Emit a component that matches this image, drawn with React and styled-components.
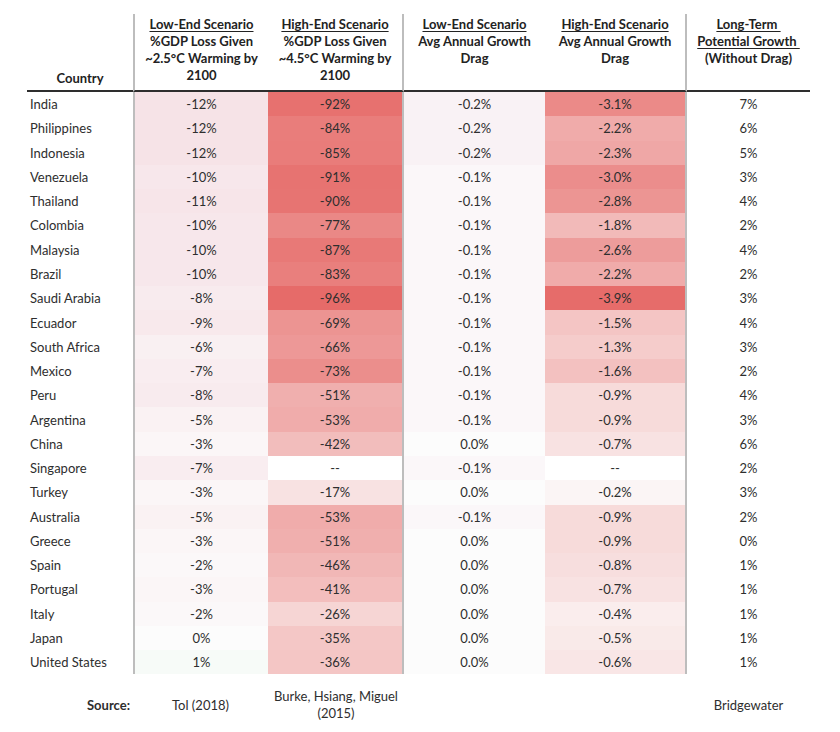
import React from 'react'
import styled, {createGlobalStyle} from 'styled-components'

const GlobalStyle = createGlobalStyle`
  html, body {
    margin: 0;
    padding: 0;
    background: #ffffff;
  }
  body {
    font-family: 'Lato', 'Open Sans', sans-serif;
    color: #2b2b2b;
  }
`

const COLS = '106px 135px 136px 141px 142px 123px'

const rows = [
    ['India', -12, -92, -0.2, -3.1, 7],
    ['Philippines', -12, -84, -0.2, -2.2, 6],
    ['Indonesia', -12, -85, -0.2, -2.3, 5],
    ['Venezuela', -10, -91, -0.1, -3.0, 3],
    ['Thailand', -11, -90, -0.1, -2.8, 4],
    ['Colombia', -10, -77, -0.1, -1.8, 2],
    ['Malaysia', -10, -87, -0.1, -2.6, 4],
    ['Brazil', -10, -83, -0.1, -2.2, 2],
    ['Saudi Arabia', -8, -96, -0.1, -3.9, 3],
    ['Ecuador', -9, -69, -0.1, -1.5, 4],
    ['South Africa', -6, -66, -0.1, -1.3, 3],
    ['Mexico', -7, -73, -0.1, -1.6, 2],
    ['Peru', -8, -51, -0.1, -0.9, 4],
    ['Argentina', -5, -53, -0.1, -0.9, 3],
    ['China', -3, -42, 0.0, -0.7, 6],
    ['Singapore', -7, null, -0.1, null, 2],
    ['Turkey', -3, -17, 0.0, -0.2, 3],
    ['Australia', -5, -53, -0.1, -0.9, 2],
    ['Greece', -3, -51, 0.0, -0.9, 0],
    ['Spain', -2, -46, 0.0, -0.8, 1],
    ['Portugal', -3, -41, 0.0, -0.7, 1],
    ['Italy', -2, -26, 0.0, -0.4, 1],
    ['Japan', 0, -35, 0.0, -0.5, 1],
    ['United States', 1, -36, 0.0, -0.6, 1],
]

const BASE = [252, 252, 252]
const scales = {
    1: {max: 12, end: [246, 227, 231]},
    2: {max: 96, end: [230, 107, 105]},
    3: {max: 0.2, end: [249, 242, 245]},
    4: {max: 3.9, end: [230, 108, 106]},
}

function shade(col, value) {
    if (value === null) return '#ffffff'
    if (value > 0) return 'rgb(247, 251, 248)'
    const {max, end} = scales[col]
    const t = Math.min(1, Math.abs(value) / max)
    const c = BASE.map((b, i) => Math.round(b + (end[i] - b) * t))
    return `rgb(${c.join(',')})`
}

function pct(col, value) {
    if (value === null) return '--'
    if (col === 3 || col === 4) return `${value.toFixed(1)}%`
    return `${value}%`
}

function ClimateTable() {
    return (
        <Page>
            <Grid>
                <HeadCell bottom>Country</HeadCell>
                <HeadCell divider="left">
                    <U>Low-End Scenario</U>
                    <Line>%GDP Loss Given</Line>
                    <Line>~2.5°C Warming by</Line>
                    <Line>2100</Line>
                </HeadCell>
                <HeadCell divider="right">
                    <U>High-End Scenario</U>
                    <Line>%GDP Loss Given</Line>
                    <Line>~4.5°C Warming by</Line>
                    <Line>2100</Line>
                </HeadCell>
                <HeadCell>
                    <U>Low-End Scenario</U>
                    <Line>Avg Annual Growth</Line>
                    <Line>Drag</Line>
                </HeadCell>
                <HeadCell divider="right">
                    <U>High-End Scenario</U>
                    <Line>Avg Annual Growth</Line>
                    <Line>Drag</Line>
                </HeadCell>
                <HeadCell>
                    <U>Long-Term&nbsp;</U>
                    <U>Potential Growth&nbsp;</U>
                    <Line>(Without Drag)</Line>
                </HeadCell>

                {rows.map(([name, a, b, c, d, e]) => (
                    <React.Fragment key={name}>
                        <NameCell>{name}</NameCell>
                        <Cell divider="left" bg={shade(1, a)}>{pct(1, a)}</Cell>
                        <Cell divider="right" bg={shade(2, b)}>{pct(2, b)}</Cell>
                        <Cell bg={shade(3, c)}>{pct(3, c)}</Cell>
                        <Cell divider="right" bg={shade(4, d)}>{pct(4, d)}</Cell>
                        <Cell bg="#ffffff">{pct(5, e)}</Cell>
                    </React.Fragment>
                ))}
            </Grid>

            <SourceRow>
                <SourceLabel>Source:</SourceLabel>
                <SourceText>Tol (2018)</SourceText>
                <SourceText>Burke, Hsiang, Miguel<br/>(2015)</SourceText>
                <span/>
                <span/>
                <SourceText>Bridgewater</SourceText>
            </SourceRow>
        </Page>
    )
}

const Page = styled.div`
  padding: 14px 0 0 27px;
  width: 783px;
`

const Grid = styled.div`
  display: grid;
  grid-template-columns: ${COLS};
  grid-template-rows: 78px;
  grid-auto-rows: 24.27px;
`

const dividerRule = ({divider}) =>
    divider === 'left' ? 'border-left: 2px solid #bdbdbd;' :
        divider === 'right' ? 'border-right: 2px solid #bdbdbd;' : ''

const HeadCell = styled.div`
  box-sizing: border-box;
  display: flex;
  flex-direction: column;
  align-items: center;
  justify-content: ${({bottom}) => bottom ? 'flex-end' : 'flex-start'};
  padding: ${({bottom}) => bottom ? '0 0 3px 0' : '2px 0 0 0'};
  font-weight: 700;
  font-size: 13px;
  line-height: 17px;
  color: #222;
  text-align: center;
  border-bottom: 2px solid #2e2e2e;
  ${dividerRule}
`

const Line = styled.span`
  white-space: nowrap;
`

const U = styled.span`
  white-space: pre;
  text-decoration: underline;
  text-underline-offset: 2px;
`

const NameCell = styled.div`
  box-sizing: border-box;
  display: flex;
  align-items: center;
  padding-left: 3px;
  font-size: 13px;
  color: #2e2e2e;
  white-space: nowrap;
`

const Cell = styled.div`
  box-sizing: border-box;
  display: flex;
  align-items: center;
  justify-content: center;
  font-size: 13px;
  color: #2e2e2e;
  background: ${({bg}) => bg};
  ${dividerRule}
`

const SourceRow = styled.div`
  display: grid;
  grid-template-columns: ${COLS};
  align-items: center;
  margin-top: 14px;
  min-height: 34px;
  font-size: 13px;
  line-height: 17px;
  color: #2e2e2e;
`

const SourceLabel = styled.div`
  font-weight: 700;
  text-align: right;
  padding-right: 3px;
`

const SourceText = styled.div`
  text-align: center;
`

export default function App() {
    return (
        <>
            <GlobalStyle/>
            <ClimateTable/>
        </>
    )
}
